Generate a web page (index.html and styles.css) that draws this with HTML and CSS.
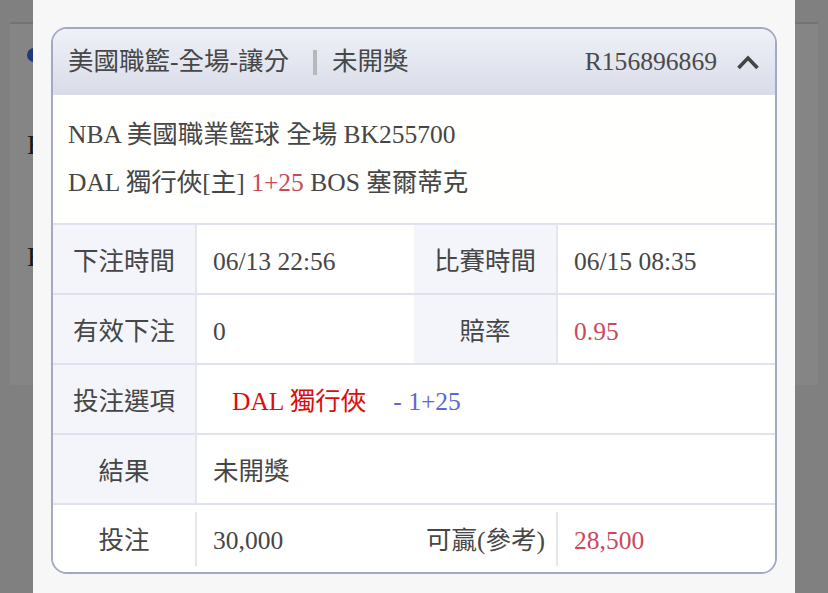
FILE: index.html
```html
<!DOCTYPE html>
<html lang="zh-Hant">
<head>
<meta charset="utf-8">
<title>注單詳情</title>
<link rel="stylesheet" href="styles.css">
</head>
<body>
<div class="under">
  <div class="under-panel">
    <div class="under-icon"></div>
    <div class="under-line">E</div>
    <div class="under-line">E</div>
  </div>
</div>
<div class="modal">
  <div class="card">
    <div class="card-head">
      <span class="title">美國職籃-全場-讓分</span>
      <span class="sep"></span>
      <span class="status">未開獎</span>
      <span class="order">R156896869</span>
      <svg class="chev" width="24" height="16" viewBox="0 0 24 16"><polyline points="2.5,14 12,4 21.5,14" fill="none" stroke="#444" stroke-width="3.6"/></svg>
    </div>
    <div class="card-info">
      <div class="info-line">NBA 美國職業籃球 全場 BK255700</div>
      <div class="info-line">DAL 獨行俠[主] <span class="pink">1+25</span> BOS 塞爾蒂克</div>
    </div>
    <div class="grid">
      <div class="cell label">下注時間</div>
      <div class="cell value">06/13 22:56</div>
      <div class="cell label">比賽時間</div>
      <div class="cell value">06/15 08:35</div>

      <div class="cell label">有效下注</div>
      <div class="cell value">0</div>
      <div class="cell label">賠率</div>
      <div class="cell value pink">0.95</div>

      <div class="cell label">投注選項</div>
      <div class="cell value span3 pick"><span class="red">DAL 獨行俠</span><span class="blue">- 1+25</span></div>

      <div class="cell label">結果</div>
      <div class="cell value span3">未開獎</div>

      <div class="cell label last">投注</div>
      <div class="cell value last">30,000</div>
      <div class="cell label last right">可贏(參考)</div>
      <div class="cell value last pink">28,500</div>
    </div>
  </div>
</div>
</body>
</html>
```
FILE: styles.css
```css
html, body {
  margin: 0;
  padding: 0;
}
body {
  width: 828px;
  height: 593px;
  overflow: hidden;
  position: relative;
  background: #808080;
  font-family: "Liberation Serif", "Noto Sans CJK TC", serif;
  color: #464646;
}
.under {
  padding: 22px 10px 0;
}
.under-panel {
  height: 363px;
  background: #858585;
  border-top: 2px solid #737373;
  padding-left: 17px;
  box-sizing: border-box;
}
.under-icon {
  width: 14px;
  height: 14px;
  border-radius: 50%;
  background: #1f3a7a;
  margin-top: 24px;
}
.under-line {
  font-size: 28px;
  line-height: 30px;
  color: #1a1a1a;
  margin-top: 68px;
}
.under-line + .under-line {
  margin-top: 82px;
}
.modal {
  position: absolute;
  left: 33px;
  top: 0;
  width: 762px;
  height: 593px;
  box-sizing: border-box;
  background: #f7f7f7;
  padding: 27px 18px 0;
}
.card {
  border: 2px solid #a4a9c3;
  border-radius: 16px;
  overflow: hidden;
  background: #fff;
}
.card-head {
  height: 66px;
  display: flex;
  align-items: center;
  padding: 0 15px;
  background: linear-gradient(#eff1f8, #d9dce8);
  color: #474747;
  line-height: 30px;
}
.title {
  font-size: 25.5px;
}
.sep {
  width: 4px;
  height: 25px;
  background: #b8b8bc;
  margin: 0 15px 0 24px;
}
.status {
  font-size: 25.5px;
}
.order {
  margin-left: auto;
  font-size: 25.6px;
  color: #4a4a4a;
}
.chev {
  margin-left: 19px;
  display: block;
}
.card-info {
  background: #fffffd;
  padding: 16px 15px 16px;
  border-bottom: 2px solid #dfe2ee;
  font-size: 25.5px;
  line-height: 48px;
}
.info-line {
  white-space: nowrap;
}
.pink {
  color: #c94a5c;
}
.grid {
  display: grid;
  grid-template-columns: 142px 219px 142px 1fr;
  font-size: 25.5px;
  line-height: 30px;
}
.cell {
  box-sizing: border-box;
  height: 70px;
  padding-top: 5px;
  display: flex;
  align-items: center;
  border-bottom: 2px solid #dfe2ee;
  white-space: nowrap;
}
.label {
  background: #f4f5fa;
  justify-content: center;
}
.value {
  background: #fff;
  border-left: 2px solid #e3e5f0;
  padding-left: 16px;
}
.span3 {
  grid-column: span 3;
}
.pick {
  padding-left: 35px;
}
.red {
  color: #dd0d0d;
  margin-right: 27px;
}
.blue {
  color: #5a68cf;
}
.cell.last {
  height: 67px;
  border-bottom: none;
  background-color: #fff;
}
.value.last {
  border-left: none;
  padding-left: 18px;
  background: linear-gradient(#e3e5f0, #e3e5f0) left center / 2px 54px no-repeat, #fff;
}
.label.right {
  justify-content: flex-end;
  padding-right: 11px;
}
```
